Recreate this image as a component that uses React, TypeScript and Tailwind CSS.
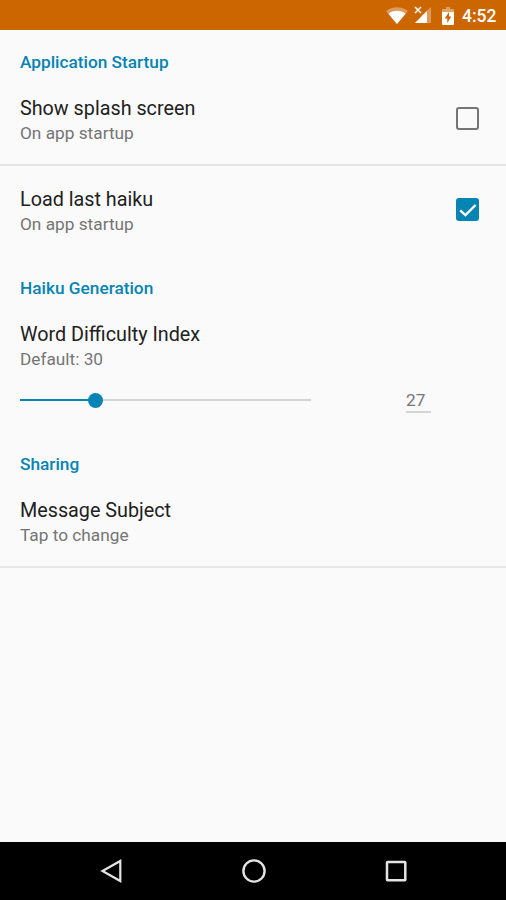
import React, { useState } from 'react'
import clsx from 'clsx'

interface PreferenceProps {
  title: string
  summary: string
  className?: string
  children?: React.ReactNode
}

const Category: React.FC<{ label: string; className?: string }> = ({ label, className }) => (
  <h2 className={clsx('px-5 text-[17.25px] leading-5 font-medium text-[#0684b3]', className)}>{label}</h2>
)

const Preference: React.FC<PreferenceProps> = ({ title, summary, className, children }) => (
  <div className={clsx('flex items-start justify-between pl-5 pr-[27px]', className)}>
    <div>
      <p className="text-[19.75px] leading-6 text-[#212121]">{title}</p>
      <p className="text-[17.25px] leading-6 text-[#757575]">{summary}</p>
    </div>
    {children}
  </div>
)

const Checkbox: React.FC<{ checked: boolean; label: string; onChange: () => void }> = ({ checked, label, onChange }) => (
  <button
    role="checkbox"
    aria-checked={checked}
    aria-label={label}
    onClick={onChange}
    className={clsx(
      'mt-2.5 flex size-[23px] items-center justify-center rounded-[3px] border-[2.5px]',
      checked ? 'border-[#0684b3] bg-[#0684b3]' : 'border-[#757575]'
    )}
  >
    {checked && (
      <svg viewBox="0 0 18 18" className="size-[18px] shrink-0" fill="none" stroke="#fff" strokeWidth="2.4">
        <path d="M1.2 9.4 6.4 14.2 16.6 4" />
      </svg>
    )}
  </button>
)

const StatusBar = () => (
  <div className="flex h-[30px] shrink-0 items-center bg-[#cc6600] pl-[386px] text-white">
    <svg viewBox="0 0 22 17" className="mt-px h-[17px] w-[22px]" fill="#fff">
      <path d="M0 4C6-1.1 16-1.1 22 4L11 17Z" opacity=".35" />
      <path d="M2.4 6.7C7.4 2.9 14.6 2.9 19.6 6.7L11 17Z" />
    </svg>
    <svg viewBox="0 0 18 18" className="ml-[6px] h-[18px] w-[18px]" fill="#fff">
      <path d="M17 1V17H1L7 11V10Z" opacity=".35" />
      <path d="M13 5V17H1Z" />
      <path d="M1 1 7 7M7 1 1 7" stroke="#fff" strokeWidth="1.5" />
    </svg>
    <svg viewBox="0 0 12 18" className="ml-[10px] mt-px h-[18px] w-3">
      <path d="M4 0H8V2H11Q12 2 12 3V6H0V3Q0 2 1 2H4Z" fill="#fff" opacity=".4" />
      <path d="M0 5H12V17Q12 18 11 18H1Q0 18 0 17Z" fill="#fff" />
      <path d="M7 5 2.7 11.5H5.3V16L9.3 9.5H7Z" fill="#cc6600" />
    </svg>
    <span className="ml-2 mt-[3px] text-[17.5px] font-medium">4:52</span>
  </div>
)

const NavigationBar = () => (
  <div className="flex h-[58px] shrink-0 items-center justify-between bg-black pl-[100px] pr-[98px]">
    <svg viewBox="0 0 24 24" className="size-6" fill="none" stroke="#e4e4e4" strokeWidth="2.2">
      <path d="M20.3 2V22L2.5 12Z" />
    </svg>
    <svg viewBox="0 0 24 24" className="size-6" fill="none" stroke="#e4e4e4" strokeWidth="2.4">
      <circle cx="12" cy="12" r="10.6" />
    </svg>
    <svg viewBox="0 0 24 24" className="size-6" fill="none" stroke="#e4e4e4" strokeWidth="2.5">
      <rect x="3" y="3" width="18.3" height="18.3" rx=".5" />
    </svg>
  </div>
)

export default function App() {
  const [showSplash, setShowSplash] = useState(false)
  const [loadLast, setLoadLast] = useState(true)
  const difficulty = 27

  return (
    <div className="flex h-[900px] w-[506px] flex-col overflow-hidden bg-[#fafafa] font-['Roboto',sans-serif]">
      <StatusBar />
      <main className="flex-1">
        <Category label="Application Startup" className="pt-[22px]" />
        <Preference title="Show splash screen" summary="On app startup" className="h-[94px] border-b-2 border-[#e5e5e5] pt-[25px]">
          <Checkbox checked={showSplash} label="Show splash screen" onChange={() => setShowSplash(!showSplash)} />
        </Preference>
        <Preference title="Load last haiku" summary="On app startup" className="h-[90px] pt-[22px]">
          <Checkbox checked={loadLast} label="Load last haiku" onChange={() => setLoadLast(!loadLast)} />
        </Preference>

        <Category label="Haiku Generation" className="pt-[22px]" />
        <Preference title="Word Difficulty Index" summary="Default: 30" className="pt-[25px]" />
        <div className="mt-[17px] flex h-6 items-center pl-5">
          <div className="flex w-[291px] items-center">
            <div className="h-[2px] bg-[#0684b3]" style={{ width: `${difficulty - 3}%` }} />
            <div className="-ml-0.5 size-[15px] rounded-full bg-[#0684b3]" />
            <div className="h-[2px] flex-1 bg-[#d4d4d4]" />
          </div>
          <span className="ml-[95px] w-[25px] border-b-2 border-[#d4d4d4] pt-[2px] text-[17.25px] leading-[22px] text-[#757575]">
            {difficulty}
          </span>
        </div>

        <Category label="Sharing" className="pt-[42px]" />
        <Preference title="Message Subject" summary="Tap to change" className="h-[94px] border-b-2 border-[#e5e5e5] pt-[25px]" />
      </main>
      <NavigationBar />
    </div>
  )
}
